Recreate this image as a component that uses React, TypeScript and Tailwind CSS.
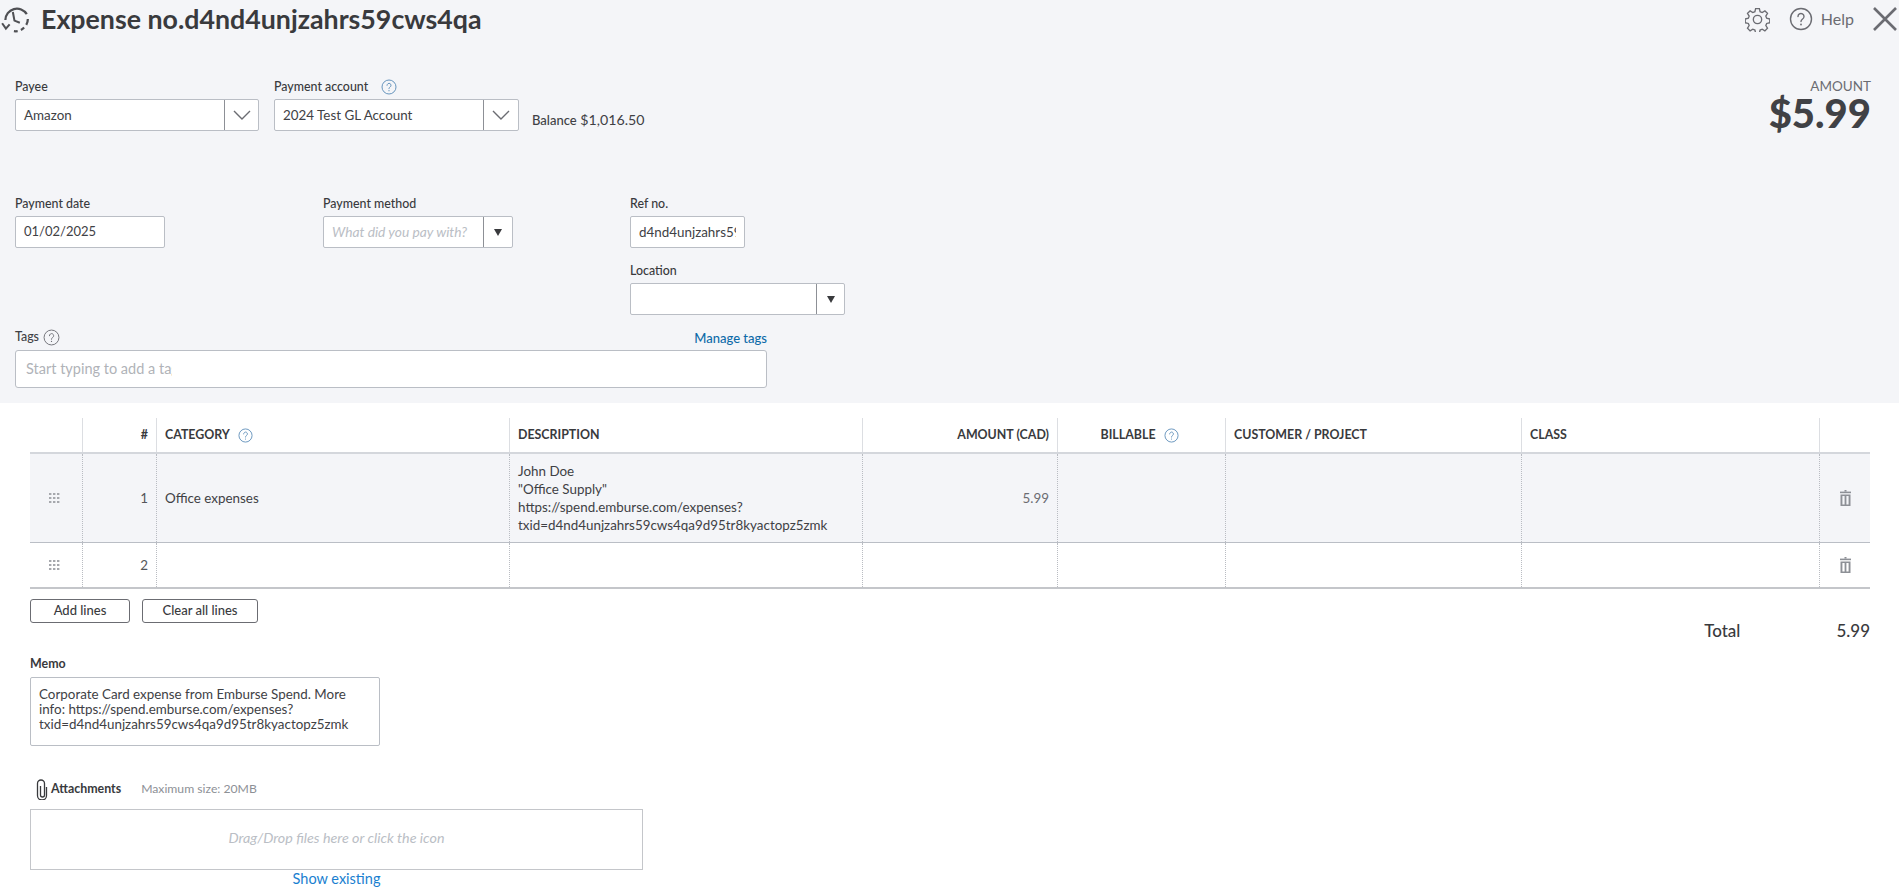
const font = { fontFamily: '"Lato", "Liberation Sans", sans-serif' };

function HelpCircle({ size, color, sw = 1.5 }: { size: number; color: string; sw?: number }) {
  return (
    <svg width={size} height={size} viewBox="0 0 24 24" fill="none" stroke={color} strokeWidth={sw} className="shrink-0">
      <circle cx="12" cy="12" r="10.5" />
      <path d="M9 9.5a3 3 0 1 1 4.6 2.5c-1 .7-1.6 1.3-1.6 2.5" strokeLinecap="round" />
      <circle cx="12" cy="17.5" r="0.9" fill={color} stroke="none" />
    </svg>
  );
}

function Chevron() {
  return (
    <svg width="18" height="10" viewBox="0 0 18 10" fill="none" stroke="#6b6c72" strokeWidth="1.4">
      <path d="M1 1l8 8 8-8" />
    </svg>
  );
}

function Caret() {
  return (
    <svg width="8" height="7" viewBox="0 0 8 7" fill="#393a3d">
      <path d="M0 0h8L4 7z" />
    </svg>
  );
}

function Grip() {
  return (
    <svg width="11" height="10" viewBox="0 0 11 10" fill="#a6a8ad">
      {[0, 4, 8].map((y) => [0, 4, 8].map((x) => <rect key={`${x}-${y}`} x={x} y={y} width="2.4" height="2" />))}
    </svg>
  );
}

function Trash() {
  return (
    <svg width="11" height="16" viewBox="0 0 11 16" fill="#8d9096">
      <rect x="4.5" y="0" width="2" height="1.6" />
      <rect x="0" y="1.6" width="11" height="1.6" />
      <path fillRule="evenodd" d="M0.5 4.4h10V16h-10zM2.4 6v8.4h2.2V6zM6.4 6v8.4h2.2V6z" />
    </svg>
  );
}

function Label({ children }: { children: React.ReactNode }) {
  return <div className="h-4 mb-[5px] text-[12.4px] leading-[18px] font-medium text-[#393a3d] whitespace-nowrap">{children}</div>;
}

function Box({ className, children }: { className: string; children?: React.ReactNode }) {
  return (
    <div className={`flex items-center bg-white border border-[#babec5] rounded-[2px] text-[13.4px] text-[#404145] overflow-hidden ${className}`}>
      {children}
    </div>
  );
}

function Combo({ width, divider, text, placeholder, h = "h-[32px]", large }: { width: string; divider: string; text?: string; placeholder?: string; h?: string; large?: boolean }) {
  return (
    <Box className={`${width} ${h}`}>
      <div className={`${divider} h-full flex items-center px-2 border-r border-[#8d9096] whitespace-nowrap ${large ? "pt-[1px]" : ""}`}>
        {text}
        {placeholder && <span className="italic text-[13.8px] text-[#babec5]">{placeholder}</span>}
      </div>
      <div className="flex-1 flex items-center justify-center">{large ? <Chevron /> : <Caret />}</div>
    </Box>
  );
}

const colBase = "h-full flex items-center px-[8px] min-w-0";

function Grid({ className, children }: { className: string; children: React.ReactNode }) {
  return <div className={`grid grid-cols-[53px_74px_353px_353px_195px_168px_296px_298px_50px] ${className}`}>{children}</div>;
}

function HeadCell({ className = "", children }: { className?: string; children?: React.ReactNode }) {
  return <div className={`${colBase} border-r border-[#dcdee2] last:border-r-0 ${className}`}>{children}</div>;
}

function Cell({ className = "", children }: { className?: string; children?: React.ReactNode }) {
  return <div className={`${colBase} border-r border-dotted border-[#b9bcc2] last:border-r-0 ${className}`}>{children}</div>;
}

function LineRow({ n, className, children }: { n: number; className: string; children?: React.ReactNode }) {
  return (
    <Grid className={className}>
      <Cell className="justify-center pr-[12px]"><Grip /></Cell>
      <Cell className="justify-end text-[#55565a]">{n}</Cell>
      {children}
    </Grid>
  );
}

export default function App() {
  return (
    <div className="w-full h-[895px] overflow-hidden bg-white text-[#404145]" style={font}>
      <div className="h-[403px] bg-[#f4f5f8]">
        <div className="h-[38px] flex items-center">
          <svg width="30" height="30" viewBox="0 0 28 28" fill="none" stroke="#4f5054" strokeWidth="2.1" className="shrink-0">
            <path d="M5 15A10.8 10.8 0 0 1 25 9.5" />
            <path d="M26 14a11 11 0 0 1-1.5 5.5" />
            <path d="M22.5 22a11 11 0 0 1-3 2.2" />
            <path d="M16.5 25.4a11 11 0 0 1-3.5 0" />
            <path d="M12 7.5l1.5 8 5 2" strokeWidth="1.9" />
            <path d="M2 18l3.5 5 3.5-4" strokeWidth="1.9" />
          </svg>
          <h1 className="ml-[11px] text-[26.75px] leading-8 font-bold text-[#393a3d] whitespace-nowrap">Expense no.d4nd4unjzahrs59cws4qa</h1>
          <div className="ml-auto flex items-center">
            <svg width="25" height="25" viewBox="0 0 24 24" fill="none" stroke="#6b6c72" strokeWidth="1.3" className="mr-[1px]">
              <circle cx="12" cy="12" r="4" />
              <path d="M10.2 1.5h3.6l.7 3 2 .8 2.6-1.6 2.5 2.5-1.6 2.6.8 2 3 .7v3.6l-3 .7-.8 2 1.6 2.6-2.5 2.5-2.6-1.6-2 .8-.7 3h-3.6l-.7-3-2-.8-2.6 1.6-2.5-2.5 1.6-2.6-.8-2-3-.7v-3.6l3-.7.8-2-1.6-2.6 2.5-2.5 2.6 1.6 2-.8z" />
            </svg>
            <div className="ml-[18px]"><HelpCircle size={24} color="#6b6c72" sw={1.4} /></div>
            <span className="ml-[8px] text-[16px] text-[#6b6c72]">Help</span>
            <svg width="24" height="24" viewBox="0 0 24 24" stroke="#6b6c72" strokeWidth="2.6" className="ml-[19px] mr-[2px]">
              <path d="M1 1l22 22M23 1L1 23" />
            </svg>
          </div>
        </div>

        <div className="mt-10 h-[53px] pl-[15px] pr-7 flex">
          <div className="w-[259px]">
            <Label>Payee</Label>
            <Combo width="w-[244px]" divider="w-[209px]" text="Amazon" large />
          </div>
          <div className="w-[258px]">
            <Label>
              <span className="flex items-center gap-[13px]">Payment account <HelpCircle size={16} color="#5b8db8" sw={1.4} /></span>
            </Label>
            <Combo width="w-[245px]" divider="w-[209px]" text="2024 Test GL Account" large />
          </div>
          <div className="mt-[31px] text-[14.2px] whitespace-nowrap"><span className="text-[13px] font-medium">Balance</span> $1,016.50</div>
          <div className="ml-auto text-right">
            <div className="text-[13.5px] leading-[16px] text-[#6b6c72]">AMOUNT</div>
            <div className="text-[40px] leading-[38px] font-black">$5.99</div>
          </div>
        </div>

        <div className="mt-[64px] pl-[15px] flex">
          <div className="w-[308px]">
            <Label>Payment date</Label>
            <Box className="w-[150px] h-[32px] px-2 text-[13px]">01/02/2025</Box>
          </div>
          <div className="w-[307px]">
            <Label>Payment method</Label>
            <Combo width="w-[190px]" divider="w-[160px]" placeholder="What did you pay with?" />
          </div>
          <div>
            <Label>Ref no.</Label>
            <Box className="w-[115px] h-[32px] pl-2 pr-[8px]"><span className="whitespace-nowrap overflow-hidden">d4nd4unjzahrs59cws4qa</span></Box>
            <div className="mt-[14px]">
              <Label>Location</Label>
              <Combo width="w-[215px]" divider="w-[186px]" />
            </div>
          </div>
        </div>

        <div className="mt-[14px] ml-[15px] w-[752px]">
          <div className="flex justify-between h-4 mb-[5px]">
            <span className="flex items-center gap-[4px] text-[12.4px] font-medium">Tags <HelpCircle size={17} color="#6b6c72" sw={1.3} /></span>
            <span className="text-[13px] font-medium text-[#0d6ba8]">Manage tags</span>
          </div>
          <Box className="h-[38px] pl-[10px] rounded-[3px]">
            <span className="w-[146px] overflow-hidden whitespace-nowrap text-[14.5px] text-[#b0b3b8]">Start typing to add a tag</span>
          </Box>
        </div>
      </div>

      <div className="mt-[15px] ml-[30px] w-[1840px] text-[13.4px]">
        <Grid className="h-[36px] border-b-2 border-[#d4d7dc] text-[12.4px] font-bold text-[#393a3d]">
          <HeadCell />
          <HeadCell className="justify-end">#</HeadCell>
          <HeadCell className="gap-2">CATEGORY <HelpCircle size={15} color="#5b8db8" sw={1.4} /></HeadCell>
          <HeadCell>DESCRIPTION</HeadCell>
          <HeadCell className="justify-end">AMOUNT (CAD)</HeadCell>
          <HeadCell className="justify-center gap-2 pr-[12px]">BILLABLE <HelpCircle size={15} color="#5b8db8" sw={1.4} /></HeadCell>
          <HeadCell>CUSTOMER / PROJECT</HeadCell>
          <HeadCell>CLASS</HeadCell>
          <HeadCell />
        </Grid>
        <LineRow n={1} className="h-[89px] bg-[#f4f5f8] border-b border-[#babec5]">
          <Cell>Office expenses</Cell>
          <Cell>
            <div className="leading-[18px] whitespace-nowrap">
              John Doe<br />"Office Supply"<br />https://spend.emburse.com/expenses?<br />txid=d4nd4unjzahrs59cws4qa9d95tr8kyactopz5zmk
            </div>
          </Cell>
          <Cell className="justify-end text-[#6b6c72]">5.99</Cell>
          <Cell /><Cell /><Cell />
          <Cell className="justify-center"><Trash /></Cell>
        </LineRow>
        <LineRow n={2} className="h-[46px] border-b-2 border-[#c4c6ca]">
          <Cell /><Cell /><Cell /><Cell /><Cell /><Cell />
          <Cell className="justify-center"><Trash /></Cell>
        </LineRow>
        <div className="flex mt-[10px] items-start">
          <button className="w-[100px] h-[24px] border border-[#6b6c72] rounded-[3px] text-[13px] font-medium text-[#393a3d]">Add lines</button>
          <button className="ml-3 w-[116px] h-[24px] border border-[#6b6c72] rounded-[3px] text-[13px] font-medium text-[#393a3d]">Clear all lines</button>
          <div className="ml-auto mt-[22px] flex text-[17px] leading-[20px] font-medium text-[#393a3d]">
            <span>Total</span>
            <span className="ml-[96px]">5.99</span>
          </div>
        </div>

        <div className="mt-[15px] text-[12.4px] font-bold leading-4 text-[#393a3d]">Memo</div>
        <div className="mt-[5px] w-[350px] h-[69px] border border-[#babec5] rounded-[2px] px-2 pt-[9px] leading-[15px] whitespace-nowrap">
          Corporate Card expense from Emburse Spend. More<br />info: https://spend.emburse.com/expenses?<br />txid=d4nd4unjzahrs59cws4qa9d95tr8kyactopz5zmk
        </div>

        <div className="mt-[32px] flex items-center h-[22px]">
          <svg width="14" height="21" viewBox="0 0 14 21" fill="none" stroke="#393a3d" strokeWidth="1.3" className="ml-[5px]">
            <path d="M11.5 8v8.5a4.5 4.5 0 0 1-9 0V4.5a3.5 3.5 0 0 1 7 0v11.5a2 2 0 0 1-4 0V7" />
          </svg>
          <span className="ml-[2px] text-[12.4px] font-bold text-[#393a3d]">Attachments</span>
          <span className="ml-5 text-[12.2px] text-[#8d9096]">Maximum size: 20MB</span>
        </div>
        <div className="mt-[9px] w-[613px] h-[61px] border border-[#c4c6ca] pb-[3px] flex items-center justify-center italic text-[14.3px] text-[#babec5]">
          Drag/Drop files here or click the icon
        </div>
        <div className="w-[613px] text-center text-[14.5px] leading-[18px] text-[#1a7fd0]">Show existing</div>
      </div>
    </div>
  );
}
